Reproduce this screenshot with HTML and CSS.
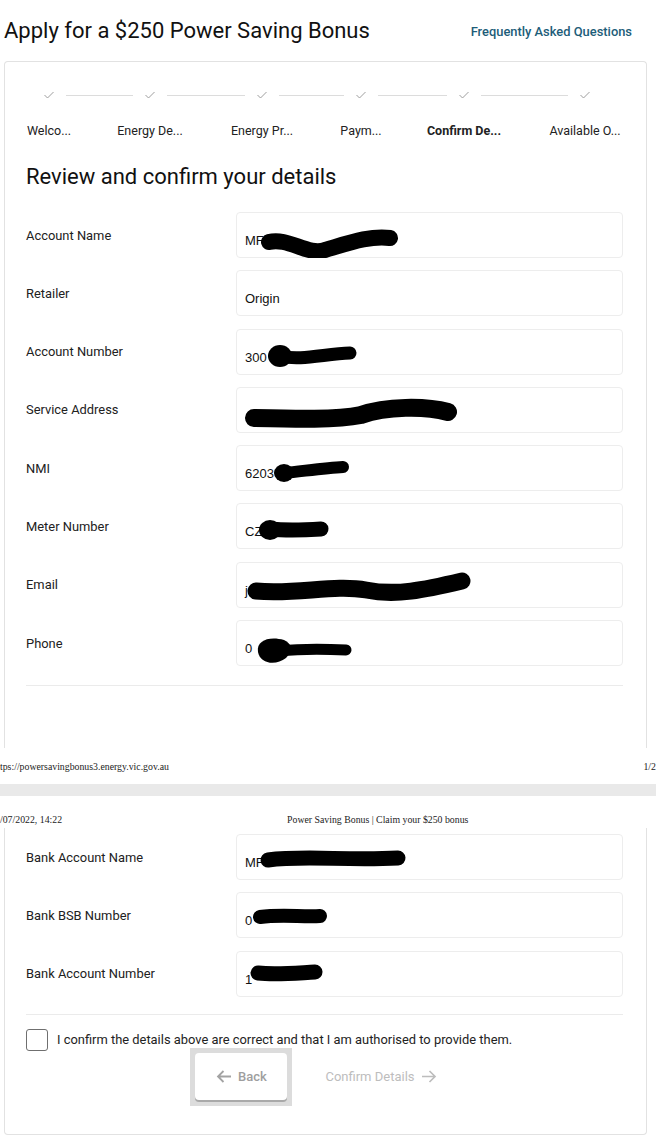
FILE: index.html
```html
<!DOCTYPE html>
<html lang="en">
<head>
    <meta charset="UTF-8">
    <meta name="viewport" content="width=device-width, initial-scale=1.0">
    <title>Power Saving Bonus | Claim your $250 bonus</title>
    <link rel="stylesheet" href="styles.css">
</head>
<body>
    <div class="top-bar">
        <h1>Apply for a $250 Power Saving Bonus</h1>
        <a class="faq" href="#">Frequently Asked Questions</a>
    </div>

    <div class="card card-first">
        <div class="stepper">
            <span class="check"><svg width="10" height="8" viewBox="0 0 10 8"><path d="M0.5 4 L3.5 7 L9.5 1" fill="none" stroke="#9e9e9e" stroke-width="1"/></svg></span>
            <span class="connector"></span>
            <span class="check"><svg width="10" height="8" viewBox="0 0 10 8"><path d="M0.5 4 L3.5 7 L9.5 1" fill="none" stroke="#9e9e9e" stroke-width="1"/></svg></span>
            <span class="connector"></span>
            <span class="check"><svg width="10" height="8" viewBox="0 0 10 8"><path d="M0.5 4 L3.5 7 L9.5 1" fill="none" stroke="#9e9e9e" stroke-width="1"/></svg></span>
            <span class="connector"></span>
            <span class="check"><svg width="10" height="8" viewBox="0 0 10 8"><path d="M0.5 4 L3.5 7 L9.5 1" fill="none" stroke="#9e9e9e" stroke-width="1"/></svg></span>
            <span class="connector"></span>
            <span class="check"><svg width="10" height="8" viewBox="0 0 10 8"><path d="M0.5 4 L3.5 7 L9.5 1" fill="none" stroke="#9e9e9e" stroke-width="1"/></svg></span>
            <span class="connector"></span>
            <span class="check"><svg width="10" height="8" viewBox="0 0 10 8"><path d="M0.5 4 L3.5 7 L9.5 1" fill="none" stroke="#9e9e9e" stroke-width="1"/></svg></span>

            <span class="step-label s1">Welco...</span>
            <span class="step-label s2">Energy De...</span>
            <span class="step-label s3">Energy Pr...</span>
            <span class="step-label s4">Paym...</span>
            <span class="step-label s5 active">Confirm De...</span>
            <span class="step-label s6">Available O...</span>
        </div>

        <h2>Review and confirm your details</h2>

        <div class="fields">
            <div class="field">
                <span class="field-label">Account Name</span>
                <div class="field-value">MF
                    <svg class="redact" width="387" height="46"><path d="M33 30 C52 25 72 44 89 38 C110 32 134 23 154 26" fill="none" stroke="#000" stroke-width="16" stroke-linecap="round"/></svg>
                </div>
            </div>
            <div class="field">
                <span class="field-label">Retailer</span>
                <div class="field-value">Origin</div>
            </div>
            <div class="field">
                <span class="field-label">Account Number</span>
                <div class="field-value">300
                    <svg class="redact" width="387" height="46"><path d="M44 27 C64 32 88 25 114 24" fill="none" stroke="#000" stroke-width="13" stroke-linecap="round"/><ellipse cx="44" cy="27" rx="12" ry="11"/></svg>
                </div>
            </div>
            <div class="field">
                <span class="field-label">Service Address</span>
                <div class="field-value">
                    <svg class="redact" width="387" height="46"><path d="M18 31 C60 32 100 33 125 28 C150 19 190 19 212 25" fill="none" stroke="#000" stroke-width="18" stroke-linecap="round"/></svg>
                </div>
            </div>
            <div class="field">
                <span class="field-label">NMI</span>
                <div class="field-value">6203
                    <svg class="redact" width="387" height="46"><path d="M48 28 C68 26 90 23 107 22" fill="none" stroke="#000" stroke-width="12" stroke-linecap="round"/><ellipse cx="48" cy="28" rx="10" ry="9"/></svg>
                </div>
            </div>
            <div class="field">
                <span class="field-label">Meter Number</span>
                <div class="field-value">CZ
                    <svg class="redact" width="387" height="46"><path d="M34 26 C52 28 70 27 85 26" fill="none" stroke="#000" stroke-width="15" stroke-linecap="round"/><ellipse cx="34" cy="27" rx="11" ry="10"/></svg>
                </div>
            </div>
            <div class="field">
                <span class="field-label">Email</span>
                <div class="field-value">j
                    <svg class="redact" width="387" height="46"><path d="M20 29 C60 33 98 22 130 28 C160 34 188 28 226 19" fill="none" stroke="#000" stroke-width="17" stroke-linecap="round"/></svg>
                </div>
            </div>
            <div class="field">
                <span class="field-label">Phone</span>
                <div class="field-value">0
                    <svg class="redact" width="387" height="46"><path d="M22 32 C20 20 34 16 48 20 C56 24 58 30 50 38 C40 46 24 44 22 32 Z"/><path d="M44 31 C62 29 90 29 110 30" fill="none" stroke="#000" stroke-width="11" stroke-linecap="round"/></svg>
                </div>
            </div>
        </div>

        <hr class="divider">
    </div>

    <div class="print-footer">
        <span>tps://powersavingbonus3.energy.vic.gov.au</span>
        <span>1/2</span>
    </div>

    <div class="page-gap"></div>

    <div class="print-header">
        <span class="print-date">/07/2022, 14:22</span>
        <span class="print-title">Power Saving Bonus | Claim your $250 bonus</span>
    </div>

    <div class="card card-second">
        <div class="fields">
            <div class="field">
                <span class="field-label">Bank Account Name</span>
                <div class="field-value">MF
                    <svg class="redact" width="387" height="46"><path d="M32 26 C70 21 110 27 162 24" fill="none" stroke="#000" stroke-width="15" stroke-linecap="round"/></svg>
                </div>
            </div>
            <div class="field">
                <span class="field-label">Bank BSB Number</span>
                <div class="field-value">0
                    <svg class="redact" width="387" height="46"><path d="M24 25 C45 22 65 25 84 24" fill="none" stroke="#000" stroke-width="14" stroke-linecap="round"/></svg>
                </div>
            </div>
            <div class="field">
                <span class="field-label">Bank Account Number</span>
                <div class="field-value">1
                    <svg class="redact" width="387" height="46"><path d="M22 22 C40 24 60 22 79 21" fill="none" stroke="#000" stroke-width="15" stroke-linecap="round"/></svg>
                </div>
            </div>
        </div>

        <hr class="divider divider-second">

        <label class="confirm">
            <span class="checkbox"></span>
            <span>I confirm the details above are correct and that I am authorised to provide them.</span>
        </label>

        <div class="actions">
            <div class="focus-ring">
                <button type="button" class="btn btn-back">
                    <svg width="16" height="13" viewBox="0 0 16 13"><path d="M15 6.5 H2 M7.5 1 L2 6.5 L7.5 12" fill="none" stroke="#a3a3a3" stroke-width="1.8"/></svg>
                    Back
                </button>
            </div>
            <button type="button" class="btn btn-next">
                Confirm Details
                <svg width="16" height="13" viewBox="0 0 16 13"><path d="M1 6.5 H14 M8.5 1 L14 6.5 L8.5 12" fill="none" stroke="#bdbdbd" stroke-width="1.7"/></svg>
            </button>
        </div>
    </div>
</body>
</html>
```

FILE: styles.css
```css
body {
    margin: 0;
    font-family: Roboto, "Liberation Sans", Arial, sans-serif;
    color: #212121;
    background: #fff;
    overflow-x: hidden;
}
.top-bar {
    height: 61px;
    display: flex;
    align-items: center;
    justify-content: space-between;
    padding: 0 24px 0 4px;
}
.top-bar h1 {
    margin: 0;
    font-size: 22px;
    font-weight: 400;
    color: #111;
}
.faq {
    color: #1d5d79;
    font-size: 12.9px;
    font-weight: 500;
    text-decoration: none;
    margin-top: 1px;
}
.card {
    margin: 0 9px 0 4px;
    border: 1px solid #e2e2e2;
    padding: 0 23px 0 21px;
    box-sizing: border-box;
}
.card-first {
    height: 687px;
    border-bottom: none;
    border-radius: 4px 4px 0 0;
}
.card-second {
    border-top: none;
    border-radius: 0 0 4px 4px;
    padding-top: 6px;
    padding-bottom: 28px;
}

/* stepper */
.stepper {
    display: grid;
    grid-template-columns: 20px 81px 20px 92px 20px 79px 20px 83px 20px 101px 20px;
    grid-template-rows: 14px 16px;
    row-gap: 21px;
    margin: 26px 0 0 13px;
}
.check {
    display: flex;
    align-items: center;
    justify-content: center;
}
.connector {
    align-self: center;
    height: 1px;
    background: #dcdcdc;
    margin: 0 7px;
}
.step-label {
    grid-row: 2;
    justify-self: center;
    white-space: nowrap;
    font-size: 12.5px;
    line-height: 16px;
    color: #222;
}
.step-label.active { font-weight: 700; }
.s1 { grid-column: 1; }
.s2 { grid-column: 3; }
.s3 { grid-column: 5; }
.s4 { grid-column: 7; }
.s5 { grid-column: 9; }
.s6 { grid-column: 11; }

h2 {
    margin: 24px 0 21px;
    font-size: 22px;
    line-height: 28px;
    font-weight: 400;
    color: #111;
}

/* fields */
.fields {
    display: flex;
    flex-direction: column;
    gap: 12.3px;
}
.field {
    display: grid;
    grid-template-columns: 210px 387px;
    align-items: center;
}
.field-label {
    font-size: 12.9px;
}
.field-value {
    position: relative;
    height: 46px;
    box-sizing: border-box;
    border: 1px solid #ededed;
    border-radius: 4px;
    padding: 20px 0 0 8px;
    font-family: "Liberation Sans", Arial, sans-serif;
    font-size: 13px;
    color: #111;
}
.redact {
    position: absolute;
    left: -1px;
    top: -1px;
}
.divider {
    border: none;
    border-top: 1px solid #ebebeb;
    margin: 19px 0 0;
}
.divider-second {
    margin-top: 17px;
}

/* print furniture */
.print-footer {
    height: 36px;
    display: flex;
    align-items: center;
    justify-content: space-between;
    font-family: "Liberation Serif", "Times New Roman", serif;
    font-size: 9.8px;
    color: #222;
}
.page-gap {
    height: 12px;
    background: #e9e9e9;
}
.print-header {
    display: flex;
    padding-top: 19px;
    height: 13px;
    font-family: "Liberation Serif", "Times New Roman", serif;
    font-size: 9.8px;
    line-height: 10px;
    color: #222;
}
.print-title {
    margin-left: 225px;
}

/* confirmation */
.confirm {
    display: flex;
    align-items: center;
    gap: 9px;
    margin-top: 14px;
    font-size: 12.9px;
    color: #222;
}
.checkbox {
    width: 22px;
    height: 22px;
    box-sizing: border-box;
    border: 1.5px solid #6f6f6f;
    border-radius: 3px;
}
.actions {
    display: flex;
    justify-content: center;
    align-items: center;
    gap: 33px;
    margin-top: -3px;
    padding-right: 22px;
}
.focus-ring {
    background: #dcdcdc;
    padding: 5px 5px 6px;
}
.btn {
    display: flex;
    align-items: center;
    gap: 6px;
    font-family: Roboto, sans-serif;
    font-size: 13px;
    font-weight: 500;
    border: none;
    background: none;
    padding: 0;
}
.btn-back {
    width: 92px;
    height: 47px;
    justify-content: center;
    background: #fff;
    border-radius: 4px;
    box-shadow: 0 2px 0 #a9a9a9;
    color: #9e9e9e;
}
.btn-next {
    color: #bdbdbd;
    font-weight: 400;
}
```
